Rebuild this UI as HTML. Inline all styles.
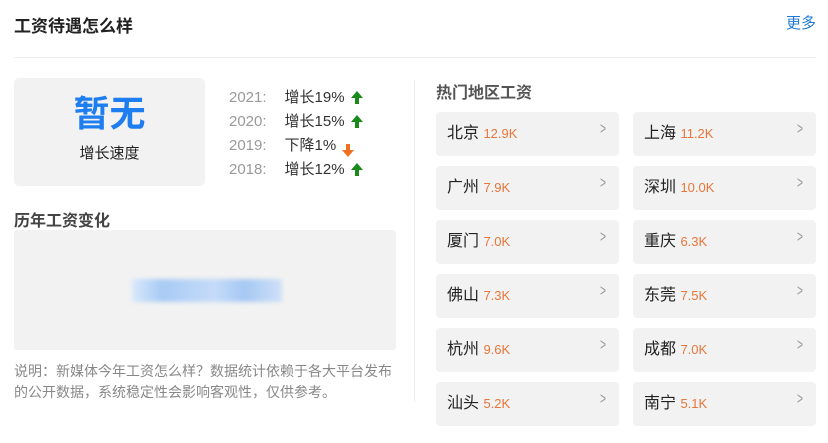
<!DOCTYPE html>
<html><head><meta charset="utf-8"><style>
*{margin:0;padding:0;box-sizing:border-box}
body{width:828px;height:443px;background:#fff;font-family:"Liberation Sans","Noto Sans CJK SC",sans-serif;position:relative;overflow:hidden;color:#333}
.a{position:absolute}
.card{position:absolute;width:183px;height:44px;background:#f2f2f2;border-radius:4px;font-size:16px;line-height:44px;padding-left:11px;color:#222}
.card span{color:#e8763a;font-size:13px}
.card i{position:absolute;right:11px;top:-5px;font-style:normal;color:#999;font-size:17px;transform:scaleX(.6)}
.yr{position:absolute;left:229px;font-size:15px;color:#999}
.yr b{font-weight:normal;color:#333;margin-left:18px}
.up{display:inline-block;width:0;height:0;border-left:6px solid transparent;border-right:6px solid transparent;border-bottom:7px solid #1a8a1a;position:relative;margin-left:6px;top:-4px}
.up:after{content:"";position:absolute;left:-2px;top:7px;width:4px;height:6px;background:#1a8a1a}
.dn{display:inline-block;width:0;height:0;border-left:6px solid transparent;border-right:6px solid transparent;border-top:7px solid #f07020;position:relative;margin-left:6px;top:7px}
.dn:after{content:"";position:absolute;left:-2px;top:-13px;width:4px;height:6px;background:#f07020}
</style></head><body>
<div class="a" style="left:14px;top:12px;font-size:17px;font-weight:bold;color:#222">工资待遇怎么样</div>
<div class="a" style="left:786px;top:12px;font-size:15px;color:#1e7ad6">更多</div>
<div class="a" style="left:14px;top:57px;width:802px;height:1px;background:#eee"></div>
<div class="a" style="left:14px;top:78px;width:191px;height:108px;background:#f2f2f2;border-radius:5px;text-align:center">
<div style="margin-top:14px;font-size:36px;font-weight:bold;color:#1e7ef0;line-height:44px">暂无</div>
<div style="font-size:15px;color:#222;margin-top:6px">增长速度</div></div>
<div class="yr" style="top:86px">2021:<b>增长19%</b><i class="up"></i></div>
<div class="yr" style="top:110px">2020:<b>增长15%</b><i class="up"></i></div>
<div class="yr" style="top:134px">2019:<b>下降1%</b><i class="dn"></i></div>
<div class="yr" style="top:158px">2018:<b>增长12%</b><i class="up"></i></div>
<div class="a" style="left:14px;top:207px;font-size:16px;font-weight:bold;color:#444">历年工资变化</div>
<div class="a" style="left:14px;top:230px;width:382px;height:120px;background:#f2f2f2;border-radius:3px"></div>
<div class="a" style="left:132px;top:279px;width:150px;height:23px;background:linear-gradient(90deg,#d8e8fb,#a8cbf5 20%,#c5dbf8 55%,#a5c8f3 75%,#cfe0f8);filter:blur(2px)"></div>
<div class="a" style="left:14px;top:361px;width:400px;font-size:14px;line-height:21px;color:#888;white-space:nowrap">说明：新媒体今年工资怎么样？数据统计依赖于各大平台发布<br>的公开数据，系统稳定性会影响客观性，仅供参考。</div>
<div class="a" style="left:414px;top:80px;width:1px;height:322px;background:#eee"></div>
<div class="a" style="left:436px;top:79px;font-size:16px;font-weight:bold;color:#555">热门地区工资</div>
<div class="card" style="left:436px;top:112px">北京 <span>12.9K</span><i>&gt;</i></div>
<div class="card" style="left:633px;top:112px">上海 <span>11.2K</span><i>&gt;</i></div>
<div class="card" style="left:436px;top:166px">广州 <span>7.9K</span><i>&gt;</i></div>
<div class="card" style="left:633px;top:166px">深圳 <span>10.0K</span><i>&gt;</i></div>
<div class="card" style="left:436px;top:220px">厦门 <span>7.0K</span><i>&gt;</i></div>
<div class="card" style="left:633px;top:220px">重庆 <span>6.3K</span><i>&gt;</i></div>
<div class="card" style="left:436px;top:274px">佛山 <span>7.3K</span><i>&gt;</i></div>
<div class="card" style="left:633px;top:274px">东莞 <span>7.5K</span><i>&gt;</i></div>
<div class="card" style="left:436px;top:328px">杭州 <span>9.6K</span><i>&gt;</i></div>
<div class="card" style="left:633px;top:328px">成都 <span>7.0K</span><i>&gt;</i></div>
<div class="card" style="left:436px;top:382px">汕头 <span>5.2K</span><i>&gt;</i></div>
<div class="card" style="left:633px;top:382px">南宁 <span>5.1K</span><i>&gt;</i></div>
</body></html>
